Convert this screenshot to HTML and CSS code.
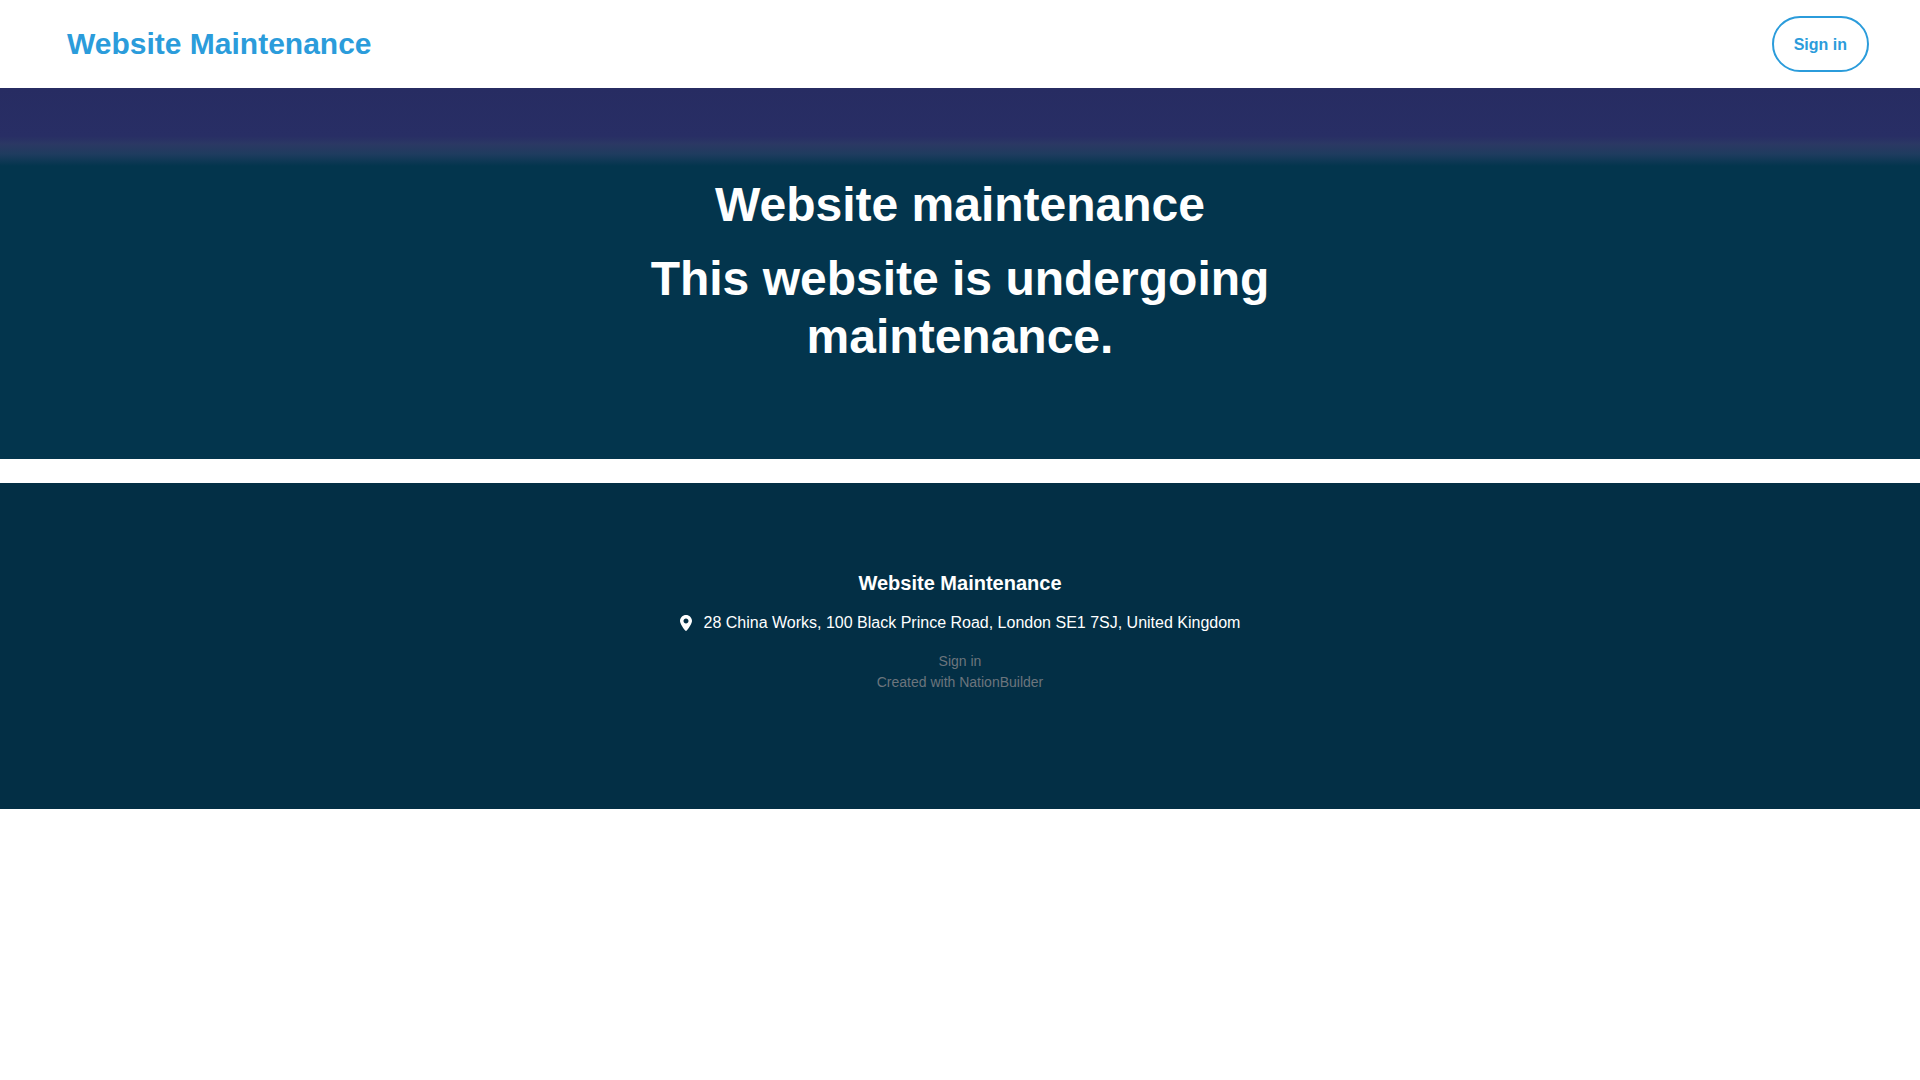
FILE: index.html
```
<!DOCTYPE html>
<html lang="en">
<head>
    <meta charset="UTF-8">
    <meta name="viewport" content="width=device-width, initial-scale=1.0">
    <title>Website Maintenance</title>
    <link rel="stylesheet" href="styles.css">
</head>
<body>
    <!-- navigation -->
    <header class="navbar">
        <a class="navbar-brand" href="/">Website Maintenance</a>
        <a class="btn-outline" href="/login">Sign in</a>
    </header>

    <!-- main message -->
    <main class="hero">
        <div class="hero-content">
            <h1>Website maintenance</h1>
            <h2>This website is undergoing maintenance.</h2>
        </div>
    </main>

    <!-- footer -->
    <footer class="footer">
        <h5 class="footer-title">Website Maintenance</h5>
        <address class="footer-address">
            <svg class="icon-marker" viewBox="0 0 384 512" aria-hidden="true">
                <path fill="currentColor" d="M384 192c0 87.4-117 243-168.3 307.2c-12.3 15.3-35.1 15.3-47.4 0C117 435 0 279.4 0 192C0 86 86 0 192 0S384 86 384 192zM192 272c44.200 0 80-35.800 80-80s-35.800-80-80-80s-80 35.800-80 80s35.800 80 80 80z"/>
            </svg>
            28 China Works, 100 Black Prince Road, London SE1 7SJ, United Kingdom
        </address>
        <div class="footer-links">
            <a href="/login">Sign in</a>
            <span>Created with <a href="/nationbuilder">NationBuilder</a></span>
        </div>
    </footer>
</body>
</html>
```

FILE: styles.css
```
* {
    box-sizing: border-box;
}

body {
    margin: 0;
    font-family: "Liberation Sans", Arial, sans-serif;
    font-size: 16px;
    line-height: 24px;
    color: #fff;
    background-color: #fff;
}

a {
    color: inherit;
    text-decoration: none;
}

h1, h2, h5 {
    margin: 0;
    font-weight: bold;
}

/* navigation */
.navbar {
    display: flex;
    justify-content: space-between;
    align-items: center;
    padding: 16px 51px 16px 67px;
    color: #2b9cdb;
}

.navbar-brand {
    font-size: 30px;
    line-height: 40px;
    font-weight: bold;
}

.btn-outline {
    padding: 15px 20px 13px;
    border: 2px solid #2b9cdb;
    border-radius: 28px;
    font-weight: bold;
}

.btn-outline:hover {
    background-color: #2b9cdb;
    color: #fff;
}

/* main message */
.hero {
    padding: 88px 24px 93px;
    background: linear-gradient(#272c62 0, #282e65 48px, #2b3864 56px, #1f3c5f 66px, #03354d 78px);
    text-align: center;
}

.hero-content {
    display: flex;
    flex-direction: column;
    gap: 16px;
    max-width: 636px;
    margin: 0 auto;
}

.hero h1,
.hero h2 {
    font-size: 48px;
    line-height: 58px;
}

/* footer */
.footer {
    display: flex;
    flex-direction: column;
    align-items: center;
    gap: 16px;
    margin-top: 24px;
    padding: 88px 24px 116px;
    background-color: #032f45;
    text-align: center;
}

.footer-title {
    font-size: 20px;
    line-height: 24px;
}

.footer-address {
    display: flex;
    align-items: center;
    gap: 12px;
    font-style: normal;
}

.icon-marker {
    width: 12px;
    height: 16px;
}

.footer-links {
    display: flex;
    flex-direction: column;
    font-size: 14px;
    line-height: 21px;
    color: #6c757d;
}
```
